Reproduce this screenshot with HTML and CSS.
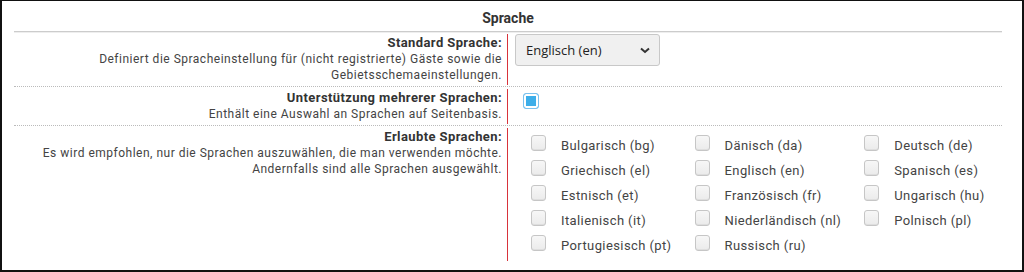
FILE: index.html
```html
<!DOCTYPE html>
<html lang="de">
<head>
  <meta charset="UTF-8">
  <title>Sprache</title>
  <link rel="stylesheet" href="styles.css">
</head>
<body>
  <div class="frame">
    <div class="settings">
      <h3 class="section-title">Sprache</h3>

      <div class="row">
        <div class="label">
          <strong>Standard Sprache:</strong>
          <span class="desc">Definiert die Spracheinstellung für (nicht registrierte) Gäste sowie die Gebietsschemaeinstellungen.</span>
        </div>
        <div class="value">
          <div class="select">
            <span>Englisch (en)</span>
            <svg width="10" height="7" viewBox="0 0 10 7"><path d="M1 1.5 L5 5 L9 1.5" fill="none" stroke="#333" stroke-width="2"/></svg>
          </div>
        </div>
      </div>

      <div class="row">
        <div class="label">
          <strong>Unterstützung mehrerer Sprachen:</strong>
          <span class="desc">Enthält eine Auswahl an Sprachen auf Seitenbasis.</span>
        </div>
        <div class="value">
          <span class="check checked"></span>
        </div>
      </div>

      <div class="row last">
        <div class="label">
          <strong>Erlaubte Sprachen:</strong>
          <span class="desc">Es wird empfohlen, nur die Sprachen auszuwählen, die man verwenden möchte.<br>Andernfalls sind alle Sprachen ausgewählt.</span>
        </div>
        <div class="value">
          <div class="lang-grid">
            <label><span class="check"></span>Bulgarisch (bg)</label>
            <label><span class="check"></span>Dänisch (da)</label>
            <label><span class="check"></span>Deutsch (de)</label>
            <label><span class="check"></span>Griechisch (el)</label>
            <label><span class="check"></span>Englisch (en)</label>
            <label><span class="check"></span>Spanisch (es)</label>
            <label><span class="check"></span>Estnisch (et)</label>
            <label><span class="check"></span>Französisch (fr)</label>
            <label><span class="check"></span>Ungarisch (hu)</label>
            <label><span class="check"></span>Italienisch (it)</label>
            <label><span class="check"></span>Niederländisch (nl)</label>
            <label><span class="check"></span>Polnisch (pl)</label>
            <label><span class="check"></span>Portugiesisch (pt)</label>
            <label><span class="check"></span>Russisch (ru)</label>
          </div>
        </div>
      </div>
    </div>
  </div>
</body>
</html>
```

FILE: styles.css
```css
html, body {
  margin: 0;
  padding: 0;
  background: #fff;
}
body {
  font-family: Roboto, "Liberation Sans", sans-serif;
  color: #333;
}
.frame {
  box-sizing: border-box;
  width: 1024px;
  height: 272px;
  border: 2px solid #111;
  border-top-width: 1px;
  padding: 0 20px 0 12px;
}
.section-title {
  margin: 0;
  font-size: 14px;
  line-height: 16px;
  font-weight: bold;
  text-align: center;
  padding: 9px 0 5px;
  border-bottom: 1px solid #ccc;
  box-shadow: 0 1px 0 #eee;
}
.row {
  display: grid;
  grid-template-columns: 493px 1fr;
  padding: 2px 0 1px;
  border-bottom: 1px dotted #bbb;
}
.row.last {
  border-bottom: none;
}
.label {
  text-align: right;
  padding: 1px 5px 2px 0;
}
.label strong {
  display: block;
  font-size: 13px;
  line-height: 16px;
  letter-spacing: 0.4px;
}
.desc {
  display: block;
  font-size: 12px;
  line-height: 16px;
  color: #444;
  letter-spacing: 0.5px;
}
.value {
  border-left: 1px solid #d8333b;
  padding-left: 7px;
}
.select {
  box-sizing: border-box;
  width: 145px;
  height: 32px;
  display: flex;
  align-items: center;
  justify-content: space-between;
  padding: 0 9px 0 10px;
  background: #f0f0f0;
  border: 1px solid #c8c8c8;
  border-radius: 3px;
  font-family: "Open Sans", "Noto Sans", sans-serif;
  font-size: 13px;
  color: #222;
}
.check {
  box-sizing: border-box;
  display: inline-block;
  width: 15px;
  height: 16px;
  border: 1px solid #c6c6c6;
  border-radius: 3px;
  background: linear-gradient(#f7f7f7, #ebebeb);
  box-shadow: inset 0 -1px 0 #dedede;
  vertical-align: middle;
}
.value > .check.checked {
  margin: 3px 0 0 8px;
  width: 16px;
  height: 16px;
  border: 1px solid #7cc2ee;
  background: #3daee9;
  box-shadow: inset 0 0 0 2px #fff;
}
.lang-grid {
  display: grid;
  grid-template-columns: repeat(3, auto);
  justify-content: start;
  column-gap: 23px;
  padding: 5px 0 3px 16px;
}
.lang-grid label {
  display: flex;
  align-items: center;
  height: 25px;
  font-size: 13px;
  color: #444;
  letter-spacing: 0.4px;
}
.lang-grid .check {
  margin: -5px 15px 0 0;
}
```
